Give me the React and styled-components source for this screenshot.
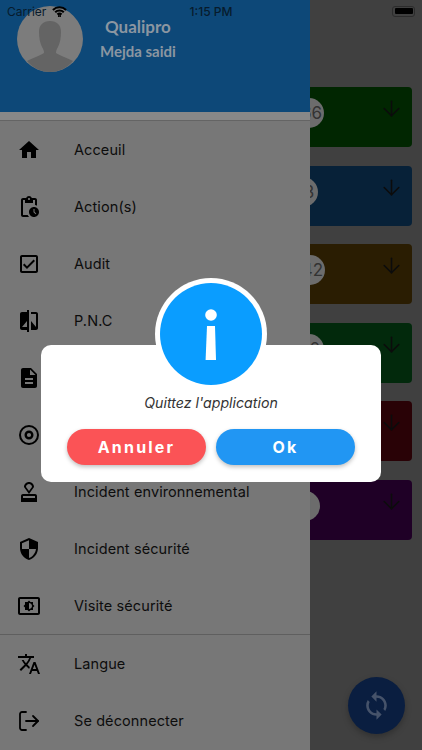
import React from 'react';
import styled, { createGlobalStyle } from 'styled-components';
import {
  MdHome,
  MdOutlinePendingActions,
  MdOutlineCheckBox,
  MdCompare,
  MdDescription,
  MdOutlineApproval,
  MdSecurity,
  MdOutlineSettingsBrightness,
  MdOutlineTranslate,
  MdSync,
} from 'react-icons/md';
import { ArrowDown, LogOut } from 'lucide-react';

const GlobalStyle = createGlobalStyle`
  html, body {
    margin: 0;
    padding: 0;
    background: #404040;
  }
  * { box-sizing: border-box; }
`;

const cards = [
  { color: '#012601', badge: '66', gap: 55 },
  { color: '#072138', badge: '13', gap: 61 },
  { color: '#2a1d02', badge: '42', gap: 54 },
  { color: '#02290c', badge: '10', gap: 55 },
  { color: '#290206', badge: '8', gap: 60 },
  { color: '#1f0026', badge: '1', gap: 59 },
];

// the target icon is not in the packages with this inner ring
const TargetIcon = () => (
  <svg width="24" height="24" viewBox="0 0 24 24">
    <circle cx="12" cy="12" r="9" fill="none" stroke="#000" strokeWidth="2" />
    <circle cx="12" cy="12" r="3.300" fill="none" stroke="#000" strokeWidth="2.400" />
  </svg>
);

// the labels of the two rows under the dialog can't be seen, so they have none
const topItems = [
  { id: 'home', label: 'Acceuil', icon: <MdHome /> },
  { id: 'actions', label: 'Action(s)', icon: <MdOutlinePendingActions /> },
  { id: 'audit', label: 'Audit', icon: <MdOutlineCheckBox /> },
  { id: 'pnc', label: 'P.N.C', icon: <MdCompare /> },
  { id: 'doc', icon: <MdDescription /> },
  { id: 'target', icon: <TargetIcon /> },
  { id: 'env', label: 'Incident environnemental', icon: <MdOutlineApproval /> },
  { id: 'secu', label: 'Incident sécurité', icon: <MdSecurity /> },
  { id: 'visit', label: 'Visite sécurité', icon: <MdOutlineSettingsBrightness /> },
];

const bottomItems = [
  { id: 'lang', label: 'Langue', icon: <MdOutlineTranslate /> },
  { id: 'logout', label: 'Se déconnecter', icon: <LogOut size={24} strokeWidth={1.8} /> },
];

export default function App() {
  return (
    <Screen>
      <GlobalStyle />
      <Content>
        {cards.map((c) => (
          <Card key={c.color} $bg={c.color}>
            <Badge>{c.badge}</Badge>
            <CardArrow $gap={c.gap}>
              <ArrowDown size={25} strokeWidth={1.5} />
            </CardArrow>
          </Card>
        ))}
      </Content>

      <Fab>
        <MdSync />
      </Fab>

      <Drawer>
        <DrawerHeader>
          <Avatar viewBox="0 0 66 66">
            <circle cx="33" cy="33" r="33" fill="#7c7c7c" />
            <path
              d="M33 15c-7 0-11 4-11 11 0 6 1 11 3 15 1 2 2 3 2 6-4 3-12 5-17 8 6 7 14 11 23 11s17-4 23-11c-5-3-13-5-17-8 0-3 1-4 2-6 2-4 3-9 3-15 0-7-4-11-11-11z"
              fill="#646464"
            />
          </Avatar>
          <Names>
            <AppName>Qualipro</AppName>
            <UserName>Mejda saidi</UserName>
          </Names>
        </DrawerHeader>
        <HeaderStrip />
        {topItems.map((item) => (
          <MenuRow key={item.id}>
            <MenuIcon>{item.icon}</MenuIcon>
            {item.label && <MenuLabel>{item.label}</MenuLabel>}
          </MenuRow>
        ))}
        <Divider />
        {bottomItems.map((item) => (
          <MenuRow key={item.id}>
            <MenuIcon>{item.icon}</MenuIcon>
            <MenuLabel>{item.label}</MenuLabel>
          </MenuRow>
        ))}
      </Drawer>

      <StatusBar>
        <Carrier>
          Carrier
          <svg width="15" height="11" viewBox="0 0 15 11" fill="none" stroke="#000" strokeWidth="2.100">
            <path d="M.9 3.900a9.400 9.400 0 0 1 13.200 0" />
            <path d="M3.200 6.300a6.100 6.100 0 0 1 8.600 0" />
            <path d="M5.400 8.600a3 3 0 0 1 4.200 0" />
            <circle cx="7.500" cy="10" r=".5" fill="#000" />
          </svg>
        </Carrier>
        <Clock>1:15 PM</Clock>
        <Battery>
          <BatteryFill />
        </Battery>
      </StatusBar>

      <Overlay>
        <Dialog>
          <InfoBadge>
            <svg width="102" height="102" viewBox="0 0 102 102">
              <circle cx="51" cy="51" r="51" fill="#0a9dff" />
              <circle cx="51" cy="32" r="5.800" fill="#fff" />
              <path d="M47 43h8l1 34H45.600z" fill="#fff" />
            </svg>
          </InfoBadge>
          <Message>Quittez l'application</Message>
          <Buttons>
            <DialogButton $bg="#fb5356">Annuler</DialogButton>
            <DialogButton $bg="#2196f3">Ok</DialogButton>
          </Buttons>
        </Dialog>
      </Overlay>
    </Screen>
  );
}

const Screen = styled.div`
  position: relative;
  width: 422px;
  height: 750px;
  overflow: hidden;
  background: #404040;
  font-family: 'Inter', 'Liberation Sans', sans-serif;
`;

const Content = styled.div`
  display: flex;
  flex-direction: column;
  gap: 18.5px;
  padding: 87px 10px 0 200px;
`;

const Card = styled.div`
  display: flex;
  justify-content: flex-end;
  align-items: flex-start;
  height: 60px;
  padding: 9px 8px 0 0;
  border-radius: 4px;
  background: ${(props) => props.$bg};
`;

const Badge = styled.div`
  display: flex;
  align-items: center;
  justify-content: center;
  width: 30px;
  height: 30px;
  margin-top: 2px;
  padding-left: 5px;
  border-radius: 50%;
  background: #6c6c6c;
  color: #333;
  font-size: 17px;
`;

const CardArrow = styled.div`
  display: flex;
  margin-left: ${(props) => props.$gap}px;
  color: #0c0c0c;
`;

const Fab = styled.div`
  position: absolute;
  left: 348px;
  top: 677px;
  display: flex;
  align-items: center;
  justify-content: center;
  width: 57px;
  height: 57px;
  border-radius: 50%;
  background: #0a1e40;
  color: #46536a;
  font-size: 31px;
  box-shadow: 0 3px 6px rgba(0, 0, 0, 0.25);
`;

const Drawer = styled.div`
  position: absolute;
  left: 0;
  top: 0;
  width: 310px;
  height: 750px;
  background: #777;
`;

const DrawerHeader = styled.div`
  display: flex;
  align-items: flex-start;
  gap: 17px;
  height: 112px;
  padding: 6px 0 0 17px;
  background: #0d4878;
`;

const Avatar = styled.svg`
  width: 66px;
  height: 66px;
`;

const Names = styled.div`
  display: flex;
  flex-direction: column;
  align-items: center;
  gap: 4px;
  padding-top: 11px;
  color: #8b96a1;
  font-family: 'Lato', 'Liberation Sans', sans-serif;
  font-weight: 700;
`;

const AppName = styled.div`
  font-size: 17px;
  line-height: 20px;
`;

const UserName = styled.div`
  font-size: 15px;
  line-height: 20px;
`;

const HeaderStrip = styled.div`
  height: 9px;
  background: #888;
  border-bottom: 1px solid #646464;
`;

const MenuRow = styled.div`
  display: flex;
  align-items: center;
  gap: 33px;
  height: 57px;
  padding-left: 17px;
`;

const MenuIcon = styled.div`
  display: flex;
  width: 24px;
  font-size: 24px;
  color: #000;
`;

const MenuLabel = styled.div`
  font-size: 14.5px;
  font-weight: 400;
  letter-spacing: 0.1px;
  color: #0d0d0d;
`;

const Divider = styled.div`
  height: 1px;
  background: #5f5f5f;
`;

const StatusBar = styled.div`
  position: absolute;
  left: 0;
  top: 0;
  display: flex;
  align-items: center;
  width: 422px;
  height: 22px;
  color: #071b2c;
  font-family: 'Inter', 'Liberation Sans', sans-serif;
  font-size: 12px;
`;

const Carrier = styled.div`
  display: flex;
  align-items: center;
  gap: 6px;
  width: 180px;
  padding-left: 7px;
`;

const Clock = styled.div`
  width: 62px;
  text-align: center;
  font-weight: 500;
`;

const Battery = styled.div`
  margin-left: 150px;
  width: 23px;
  height: 11px;
  padding: 1.5px;
  border: 1px solid #2c2c2c;
  border-radius: 3px;
`;

const BatteryFill = styled.div`
  width: 100%;
  height: 100%;
  border-radius: 1px;
  background: #000;
`;

const Overlay = styled.div`
  position: absolute;
  left: 0;
  top: 345px;
  display: flex;
  justify-content: center;
  width: 422px;
`;

const Dialog = styled.div`
  position: relative;
  display: flex;
  flex-direction: column;
  align-items: center;
  width: 340px;
  height: 137px;
  padding-top: 48px;
  border-radius: 10px;
  background: #fff;
`;

const InfoBadge = styled.div`
  position: absolute;
  left: 114px;
  top: -67px;
  display: flex;
  padding: 5px;
  border-radius: 50%;
  background: #fff;
`;

const Message = styled.div`
  font-size: 14.2px;
  line-height: 20px;
  font-style: italic;
  color: #333;
`;

const Buttons = styled.div`
  display: flex;
  gap: 10px;
  margin-top: 16px;
`;

const DialogButton = styled.div`
  display: flex;
  align-items: center;
  justify-content: center;
  width: 139px;
  height: 36px;
  border-radius: 18px;
  background: ${(props) => props.$bg};
  color: #fff;
  font-size: 16px;
  font-weight: 700;
  letter-spacing: 2.2px;
  box-shadow: 0 2px 4px rgba(0, 0, 0, 0.25);
`;
